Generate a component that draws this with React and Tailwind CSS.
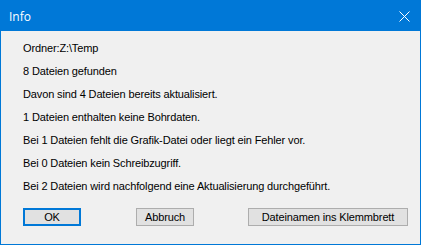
export default function App() {
  const lines = [
    'Ordner:Z:\\Temp',
    '8 Dateien gefunden',
    'Davon sind 4 Dateien bereits aktualisiert.',
    '1 Dateien enthalten keine Bohrdaten.',
    'Bei 1 Dateien fehlt die Grafik-Datei oder liegt ein Fehler vor.',
    'Bei 0 Dateien kein Schreibzugriff.',
    'Bei 2 Dateien wird nachfolgend eine Aktualisierung durchgeführt.',
  ];

  return (
    <div className="w-[421px] h-[245px] border border-[#0078d7] bg-[#f0f0f0] flex flex-col font-['Liberation_Sans',Arial,sans-serif]">
      {/* Title bar */}
      <div className="h-[30px] bg-[#0078d7] flex items-center justify-between text-white shrink-0">
        <span className="ml-[8px] text-[12px] mt-[1px] font-['Open_Sans','Liberation_Sans',sans-serif]">Info</span>
        <svg width="11" height="11" viewBox="0 0 11 11" className="mr-[10px] mt-[1px]">
          <path d="M0.5 0.5 L10.5 10.5 M10.5 0.5 L0.5 10.5" stroke="white" strokeWidth="1" />
        </svg>
      </div>

      {/* Message lines */}
      <div className="flex flex-col pl-[22px] pt-[6px] text-[11px] tracking-[-0.13px] leading-[23px] text-black">
        {lines.map((l) => (
          <div key={l} className="whitespace-nowrap">{l}</div>
        ))}
      </div>

      {/* Buttons */}
      <div className="flex items-start mt-[10px] pl-[22px] text-[11px] tracking-[-0.13px] text-black">
        <button className="w-[58px] h-[18px] border-2 border-[#0078d7] bg-[#e1e1e1] leading-none">OK</button>
        <button className="ml-[55px] w-[58px] h-[18px] border border-[#adadad] bg-[#e1e1e1] leading-none">Abbruch</button>
        <button className="ml-[54px] w-[160px] h-[18px] border border-[#adadad] bg-[#e1e1e1] leading-none">Dateinamen ins Klemmbrett</button>
      </div>
    </div>
  );
}
